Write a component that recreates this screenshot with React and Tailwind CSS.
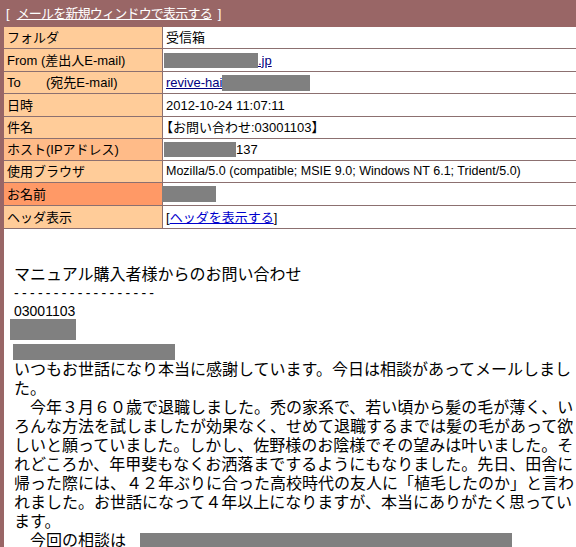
const LINE = 'border-b border-[#8c7070]';

function Redact({ w, h, className = '' }) {
  return <span className={`inline-block bg-[#808080] align-middle ${w} ${h} ${className}`} />;
}

const rows = [
  { label: 'フォルダ', h: 'h-[21px]', bg: 'bg-[#ffcc99]', value: <span>受信箱</span> },
  {
    label: 'From (差出人E-mail)',
    h: 'h-[22px]',
    bg: 'bg-[#ffcc99]',
    value: (
      <span className="flex items-center -ml-[2px]">
        <Redact w="w-[94px]" h="h-[15px]" />
        <span className="text-[#000080] underline">.jp</span>
      </span>
    ),
  },
  {
    label: 'To       (宛先E-mail)',
    h: 'h-[21px]',
    bg: 'bg-[#ffcc99]',
    value: (
      <span className="flex items-center">
        <span className="text-[#000080] underline">revive-hai</span>
        <Redact w="w-[88px]" h="h-[16px]" />
      </span>
    ),
  },
  { label: '日時', h: 'h-[22px]', bg: 'bg-[#ffcc99]', value: <span>2012-10-24 11:07:11</span> },
  { label: '件名', h: 'h-[21px]', bg: 'bg-[#ffcc99]', value: <span className="-ml-[6px]">【お問い合わせ:03001103】</span> },
  {
    label: 'ホスト(IPアドレス)',
    h: 'h-[21px]',
    bg: 'bg-[#ffbb88]',
    value: (
      <span className="flex items-center -ml-[2px]">
        <Redact w="w-[72px]" h="h-[15px]" />
        <span>137</span>
      </span>
    ),
  },
  {
    label: '使用ブラウザ',
    h: 'h-[21px]',
    bg: 'bg-[#ffcc99]',
    value: <span className="text-[12.5px]">Mozilla/5.0 (compatible; MSIE 9.0; Windows NT 6.1; Trident/5.0)</span>,
  },
  {
    label: 'お名前',
    h: 'h-[22px]',
    bg: 'bg-[#ff9966]',
    value: <Redact w="w-[54px]" h="h-[16px]" className="-ml-[4px]" />,
  },
  {
    label: 'ヘッダ表示',
    h: 'h-[22px]',
    bg: 'bg-[#ffcc99]',
    value: (
      <span>
        [<span className="text-[#0000cc] underline">ヘッダを表示する</span>]
      </span>
    ),
  },
];

const body = [
  'いつもお世話になり本当に感謝しています。今日は相談があってメールしまし',
  'た。',
  '　今年３月６０歳で退職しました。禿の家系で、若い頃から髪の毛が薄く、い',
  'ろんな方法を試しましたが効果なく、せめて退職するまでは髪の毛があって欲',
  'しいと願っていました。しかし、佐野様のお陰様でその望みは叶いました。そ',
  'れどころか、年甲斐もなくお洒落までするようにもなりました。先日、田舎に',
  '帰った際には、４２年ぶりに合った高校時代の友人に「植毛したのか」と言わ',
  'れました。お世話になって４年以上になりますが、本当にありがたく思ってい',
  'ます。',
];

export default function App() {
  return (
    <div className="w-[576px] h-[547px] overflow-hidden bg-white border-l-4 border-[#996666] font-['Liberation_Sans','Noto_Sans_CJK_JP',sans-serif] text-black">
      <div className="h-[27px] bg-[#996666] text-white text-[13px] flex items-center -ml-[4px] pl-[6px]">
        <span>[</span>
        <span className="underline ml-[7px] mr-[6px] tracking-[-0.8px]">メールを新規ウィンドウで表示する</span>
        <span>]</span>
      </div>

      <div className="text-[13px] leading-none">
        {rows.map((r) => (
          <div key={r.label} className={`flex ${LINE}`}>
            <div className={`w-[159px] shrink-0 ${r.h} ${r.bg} border-r border-[#8c7070] flex items-center pl-[3px] whitespace-pre`}>
              {r.label}
            </div>
            <div className={`flex-1 ${r.h} flex items-center pl-[3px] whitespace-nowrap`}>{r.value}</div>
          </div>
        ))}
      </div>

      <div className="pl-[10px] pt-[35px] font-['Noto_Sans_CJK_JP',sans-serif] text-[16px] whitespace-nowrap">
        <div className="h-[19px] leading-[19px]">マニュアル購入者様からのお問い合わせ</div>
        <div className="h-[19px] leading-[19px] font-['Liberation_Sans',sans-serif] text-[14px] tracking-[3.3px] pt-[1px]">------------------</div>
        <div className="h-[17px] leading-[19px] font-['Liberation_Sans',sans-serif] text-[14px]">03001103</div>
        <div className="h-[25px] -ml-[4px]">
          <Redact w="w-[66px]" h="h-[21px]" className="align-top" />
        </div>
        <div className="h-[15px] -ml-[1px]">
          <Redact w="w-[162px]" h="h-[16px]" className="align-top" />
        </div>
        {body.map((l, i) => (
          <div key={i} className="h-[19px] leading-[19px]">
            {l}
          </div>
        ))}
        <div className="h-[19px] leading-[19px] flex items-start">
          <span>　今回の相談は</span>
          <span className="inline-block w-[372px] h-[16px] bg-[#808080] mt-[3px] ml-[14px]" />
        </div>
      </div>
    </div>
  );
}
